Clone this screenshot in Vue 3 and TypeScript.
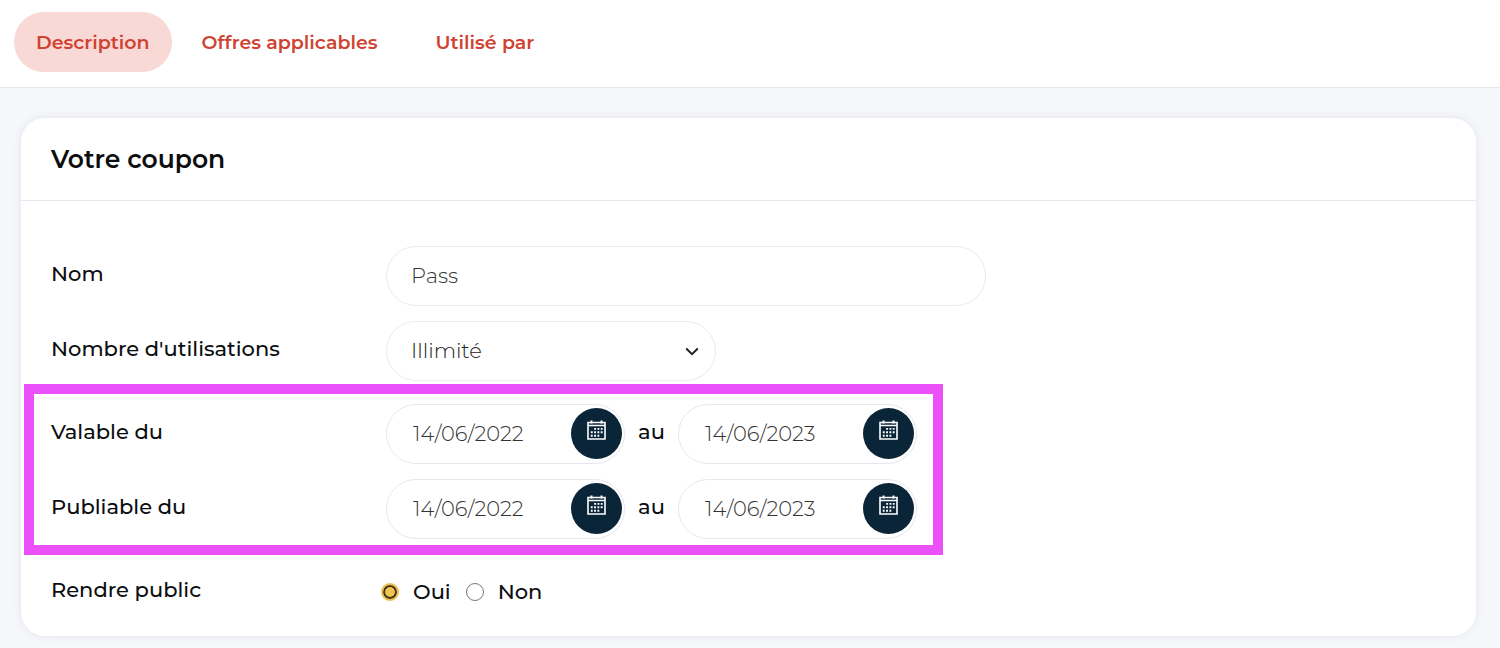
<script setup lang="ts">
import { reactive, ref } from 'vue'

interface Period {
  id: string
  label: string
  from: string
  to: string
}

const tabs = ['Description', 'Offres applicables', 'Utilisé par']
const activeTab = ref('Description')
const name = ref('Pass')
const uses = ref('Illimité')
const isPublic = ref('oui')

const periods = reactive<Period[]>([
  { id: 'valable', label: 'Valable du', from: '14/06/2022', to: '14/06/2023' },
  { id: 'publiable', label: 'Publiable du', from: '14/06/2022', to: '14/06/2023' },
])

const ends: ('from' | 'to')[] = ['from', 'to']
</script>

<template>
  <div class="page">
    <nav class="tabs">
      <button
        v-for="tab in tabs"
        :key="tab"
        type="button"
        class="tab"
        :class="{ active: tab === activeTab }"
        @click="activeTab = tab"
      >{{ tab }}</button>
    </nav>

    <main class="content">
      <section class="card">
        <header class="card-header">
          <h2>Votre coupon</h2>
        </header>
        <form class="card-body" @submit.prevent>
          <div class="row">
            <label class="label" for="nom">Nom</label>
            <input id="nom" v-model="name" class="control name" type="text" />
          </div>
          <div class="row">
            <label class="label" for="uses">Nombre d'utilisations</label>
            <div class="select-wrap">
              <select id="uses" v-model="uses" class="control">
                <option>Illimité</option>
              </select>
              <svg class="chevron" viewBox="0 0 14 9" aria-hidden="true">
                <path d="M1.2 1.5 L7 7.2 L12.8 1.5" />
              </svg>
            </div>
          </div>

          <div class="periods">
            <div v-for="period in periods" :key="period.id" class="row">
              <label class="label" :for="period.id + '-from'">{{ period.label }}</label>
              <template v-for="end in ends" :key="end">
                <label v-if="end === 'to'" class="between" :for="period.id + '-to'">au</label>
                <div class="date">
                  <input :id="period.id + '-' + end" v-model="period[end]" type="text" />
                  <button type="button" class="calendar" aria-label="Calendrier">
                    <svg viewBox="0 0 19 20" aria-hidden="true">
                      <path class="frame" d="M1 2.5 H18 V19 H1 Z M1 5.5 H18" />
                      <path class="ring" d="M4.5 0.5 V3.5 M14.5 0.5 V3.5" />
                      <path
                        class="dots"
                        d="M7.2 8.9 H15.6 M3.8 12.3 H15.6 M3.8 15.7 H12.4"
                      />
                    </svg>
                  </button>
                </div>
              </template>
            </div>
          </div>

          <div class="row public" role="radiogroup" aria-labelledby="public-label">
            <span id="public-label" class="label">Rendre public</span>
            <div class="choices">
              <input id="oui" v-model="isPublic" type="radio" name="public" value="oui" />
              <label for="oui">Oui</label>
              <input id="non" v-model="isPublic" type="radio" name="public" value="non" />
              <label for="non">Non</label>
            </div>
          </div>
        </form>
      </section>
    </main>
  </div>
</template>

<style>
body {
  margin: 0;
  background: #f6f7fb;
}
</style>

<style scoped>
.page,
.page button,
.page input,
.page select {
  font-family: Montserrat, Inter, "Open Sans", sans-serif;
}

.page {
  box-sizing: border-box;
  color: #0c0d0f;
  font-size: 21px;
  font-weight: 500;
  line-height: 28px;
}

.page *,
.page *::after {
  box-sizing: border-box;
}

.tabs {
  display: flex;
  gap: 2px;
  padding: 12px 14px 15px;
  background: #fff;
  border-bottom: 1px solid #e8e8ea;
}

.tab {
  height: 60px;
  padding: 0 28px;
  border: 0;
  border-radius: 30px;
  background: transparent;
  color: #cf4332;
  font-size: 19px;
  font-weight: 600;
  white-space: nowrap;
}

.tab.active {
  padding: 0 22px;
  background: #f8d9d6;
}

.content {
  padding: 30px 24px 12px 21px;
}

.card {
  background: #fff;
  border-radius: 24px;
  box-shadow: 0 0 10px rgba(30, 30, 60, 0.08);
}

.card-header {
  padding: 24px 30px;
  border-bottom: 1px solid #e8e8ea;
}

h2 {
  margin: 0;
  font-size: 25px;
  font-weight: 600;
  line-height: 34px;
}

.card-body {
  display: flex;
  flex-direction: column;
  gap: 15px;
  padding: 45px 30px 28px;
}

.row {
  display: flex;
  align-items: center;
}

.label {
  flex: 0 0 335px;
  padding-bottom: 4px;
}

.control {
  width: 100%;
  height: 60px;
  padding: 0 24px 2px;
  border: 1px solid #ebebed;
  border-radius: 30px;
  outline: 0;
  background: #fff;
  color: #333;
  font-size: 21px;
  font-weight: 300;
}

.name {
  max-width: 600px;
}

.select-wrap {
  position: relative;
  width: 330px;
}

select.control {
  appearance: none;
  color: #222;
}

.chevron {
  position: absolute;
  top: 26px;
  right: 17px;
  width: 14px;
  height: 9px;
  fill: none;
  stroke: #222;
  stroke-width: 2;
  pointer-events: none;
}

.periods {
  position: relative;
  display: flex;
  flex-direction: column;
  gap: 15px;
  width: fit-content;
  margin-top: 8px;
}

.periods::after {
  content: "";
  position: absolute;
  inset: -20px -26px -16px -27px;
  border: 10px solid #ec50f8;
  pointer-events: none;
}

.date {
  display: flex;
  align-items: flex-start;
  width: 239px;
  height: 60px;
  padding: 3px 2px 0 26px;
  border: 1px solid #e8e6f0;
  border-radius: 30px;
}

.date input {
  flex: 1;
  min-width: 0;
  height: 51px;
  padding: 0;
  border: 0;
  outline: 0;
  background: transparent;
  color: #333;
  font-size: 21px;
  font-weight: 300;
}

.calendar {
  display: flex;
  justify-content: center;
  width: 51px;
  height: 51px;
  padding: 12px 0 0;
  border: 0;
  border-radius: 50%;
  background: #0b2538;
}

.calendar svg {
  width: 19px;
  height: 20px;
  fill: none;
  stroke: #fff;
}

.frame {
  stroke-width: 1.6;
}

.ring {
  stroke-width: 2;
}

.dots {
  stroke-width: 1.9;
  stroke-dasharray: 1.9 1.4;
}

.between {
  width: 53px;
  padding-bottom: 4px;
  text-align: center;
}

.public {
  margin-top: 22px;
}

.choices {
  display: flex;
  align-items: center;
}

.choices input {
  appearance: none;
  width: 18px;
  height: 18px;
  margin: 0 14px 0 -5px;
  border: 1px solid #767676;
  border-radius: 50%;
  background: #fff;
}

.choices input:checked {
  border: 2px solid #e9bd52;
  background: #f3c34f;
  box-shadow: inset 0 0 0 2px #3d3215;
}

.choices label {
  margin-right: 20px;
}
</style>
